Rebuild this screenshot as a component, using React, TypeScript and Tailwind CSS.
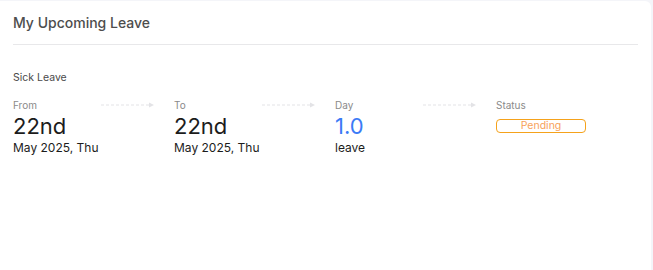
const font = { fontFamily: '"Inter", "Lato", sans-serif' };

function Arrow() {
  return (
    <svg width="54" height="6" viewBox="0 0 54 6" className="shrink-0">
      <line x1="0" y1="3" x2="48" y2="3" stroke="#e3e3e6" strokeWidth="1" strokeDasharray="3 2" />
      <path d="M48 0.5 L53 3 L48 5.5 Z" fill="#e3e3e6" />
    </svg>
  );
}

type Col = {
  label: string;
  arrow: boolean;
  body: React.ReactNode;
};

const cols: Col[] = [
  {
    label: 'From',
    arrow: true,
    body: (
      <>
        <div className="text-[22px] leading-[28px] text-[#1c1c1c]">22nd</div>
        <div className="text-[12px] leading-[16px] text-[#1c1c1c]">May 2025, Thu</div>
      </>
    ),
  },
  {
    label: 'To',
    arrow: true,
    body: (
      <>
        <div className="text-[22px] leading-[28px] text-[#1c1c1c]">22nd</div>
        <div className="text-[12px] leading-[16px] text-[#1c1c1c]">May 2025, Thu</div>
      </>
    ),
  },
  {
    label: 'Day',
    arrow: true,
    body: (
      <>
        <div className="text-[22px] leading-[28px] text-[#3b7bf6]">1.0</div>
        <div className="text-[12px] leading-[16px] text-[#1c1c1c]">leave</div>
      </>
    ),
  },
  {
    label: 'Status',
    arrow: false,
    body: (
      <div className="mt-[7px] flex h-[14px] w-[90px] items-center justify-center rounded-[4px] border border-[#f5a21b] text-[10.5px] leading-none text-[#f7a25a]">
        Pending
      </div>
    ),
  },
];

export default function App() {
  return (
    <div className="h-[270px] w-[653px] bg-[#f4f5f9] pt-px" style={font}>
      <div className="h-[269px] w-[651px] rounded-tr-[6px] bg-white px-[13px]">
        <div className="flex h-[44px] items-center border-b border-[#e8e8ea]">
          <h2 className="text-[14px] font-medium text-[#4d4d4d]">My Upcoming Leave</h2>
        </div>
        <div className="pt-[26px]">
          <div className="text-[10.5px] leading-[14px] text-[#4a4a4a]">Sick Leave</div>
          <div className="mt-[13px] flex">
            {cols.map((c) => (
              <div key={c.label} className="w-[161px] shrink-0">
                <div className="flex h-[14px] items-center justify-between pr-[19px]">
                  <span className="text-[10px] text-[#8a8a8a]">{c.label}</span>
                  {c.arrow && <Arrow />}
                </div>
                {c.body}
              </div>
            ))}
          </div>
        </div>
      </div>
    </div>
  );
}
